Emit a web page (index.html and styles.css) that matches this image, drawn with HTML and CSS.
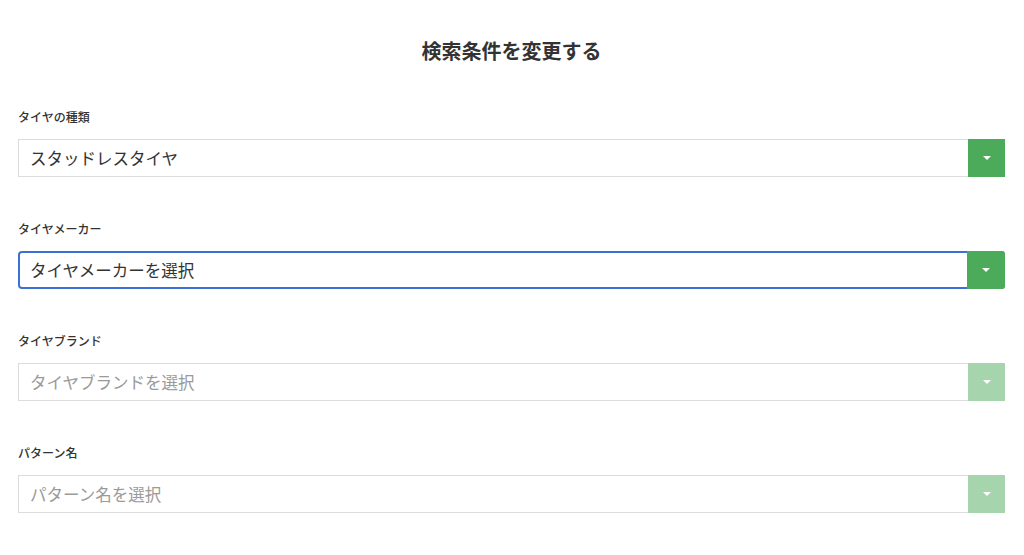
FILE: index.html
```html
<!DOCTYPE html>
<html lang="ja">
<head>
<meta charset="utf-8">
<link rel="stylesheet" href="styles.css">
</head>
<body>
<div class="page">
  <h1 class="title">検索条件を変更する</h1>
  <div class="field">
    <div class="label">タイヤの種類</div>
    <div class="select">
      <span class="value">スタッドレスタイヤ</span>
      <span class="btn"><span class="tri"></span></span>
    </div>
  </div>
  <div class="field">
    <div class="label">タイヤメーカー</div>
    <div class="select focus">
      <span class="value">タイヤメーカーを選択</span>
      <span class="btn"><span class="tri"></span></span>
    </div>
  </div>
  <div class="field">
    <div class="label">タイヤブランド</div>
    <div class="select disabled">
      <span class="value">タイヤブランドを選択</span>
      <span class="btn"><span class="tri"></span></span>
    </div>
  </div>
  <div class="field">
    <div class="label">パターン名</div>
    <div class="select disabled">
      <span class="value">パターン名を選択</span>
      <span class="btn"><span class="tri"></span></span>
    </div>
  </div>
</div>
</body>
</html>
```
FILE: styles.css
```css
html, body {
  margin: 0;
  padding: 0;
  background: #fff;
}
body {
  font-family: "Noto Sans CJK JP", "Noto Sans", sans-serif;
  color: #333;
}
.page {
  padding: 36px 19px 0 18px;
}
.title {
  margin: 0 0 42px;
  font-size: 20px;
  line-height: 30px;
  font-weight: 700;
  text-align: center;
  color: #333;
}
.field {
  margin-bottom: 43.5px;
}
.label {
  font-size: 12px;
  line-height: 18px;
  font-weight: 500;
  color: #333;
  margin-bottom: 13px;
}
.select {
  display: flex;
  align-items: stretch;
  height: 37.5px;
  box-sizing: border-box;
  border: 1px solid #dcdcdc;
  background: #fff;
}
.select .value {
  flex: 1;
  display: flex;
  align-items: center;
  padding-left: 11px;
  font-size: 16.5px;
  color: #333;
}
.select .btn {
  width: 37px;
  background: #4caa5b;
  display: flex;
  align-items: center;
  justify-content: center;
  margin: -1px -1px -1px 0;
}
.tri {
  width: 0;
  height: 0;
  border-left: 4px solid transparent;
  border-right: 4px solid transparent;
  border-top: 4px solid #fff;
}
.select.focus {
  border: 2px solid #3d70d6;
  border-radius: 4px;
}
.select.focus .value {
  padding-left: 10px;
}
.select.focus .btn {
  margin: -2px -2px -2px 0;
  width: 38px;
  border-radius: 0 3px 3px 0;
}
.select.disabled .value {
  color: #9a9a9a;
}
.select.disabled .btn {
  background: #a6d5ad;
}
```
